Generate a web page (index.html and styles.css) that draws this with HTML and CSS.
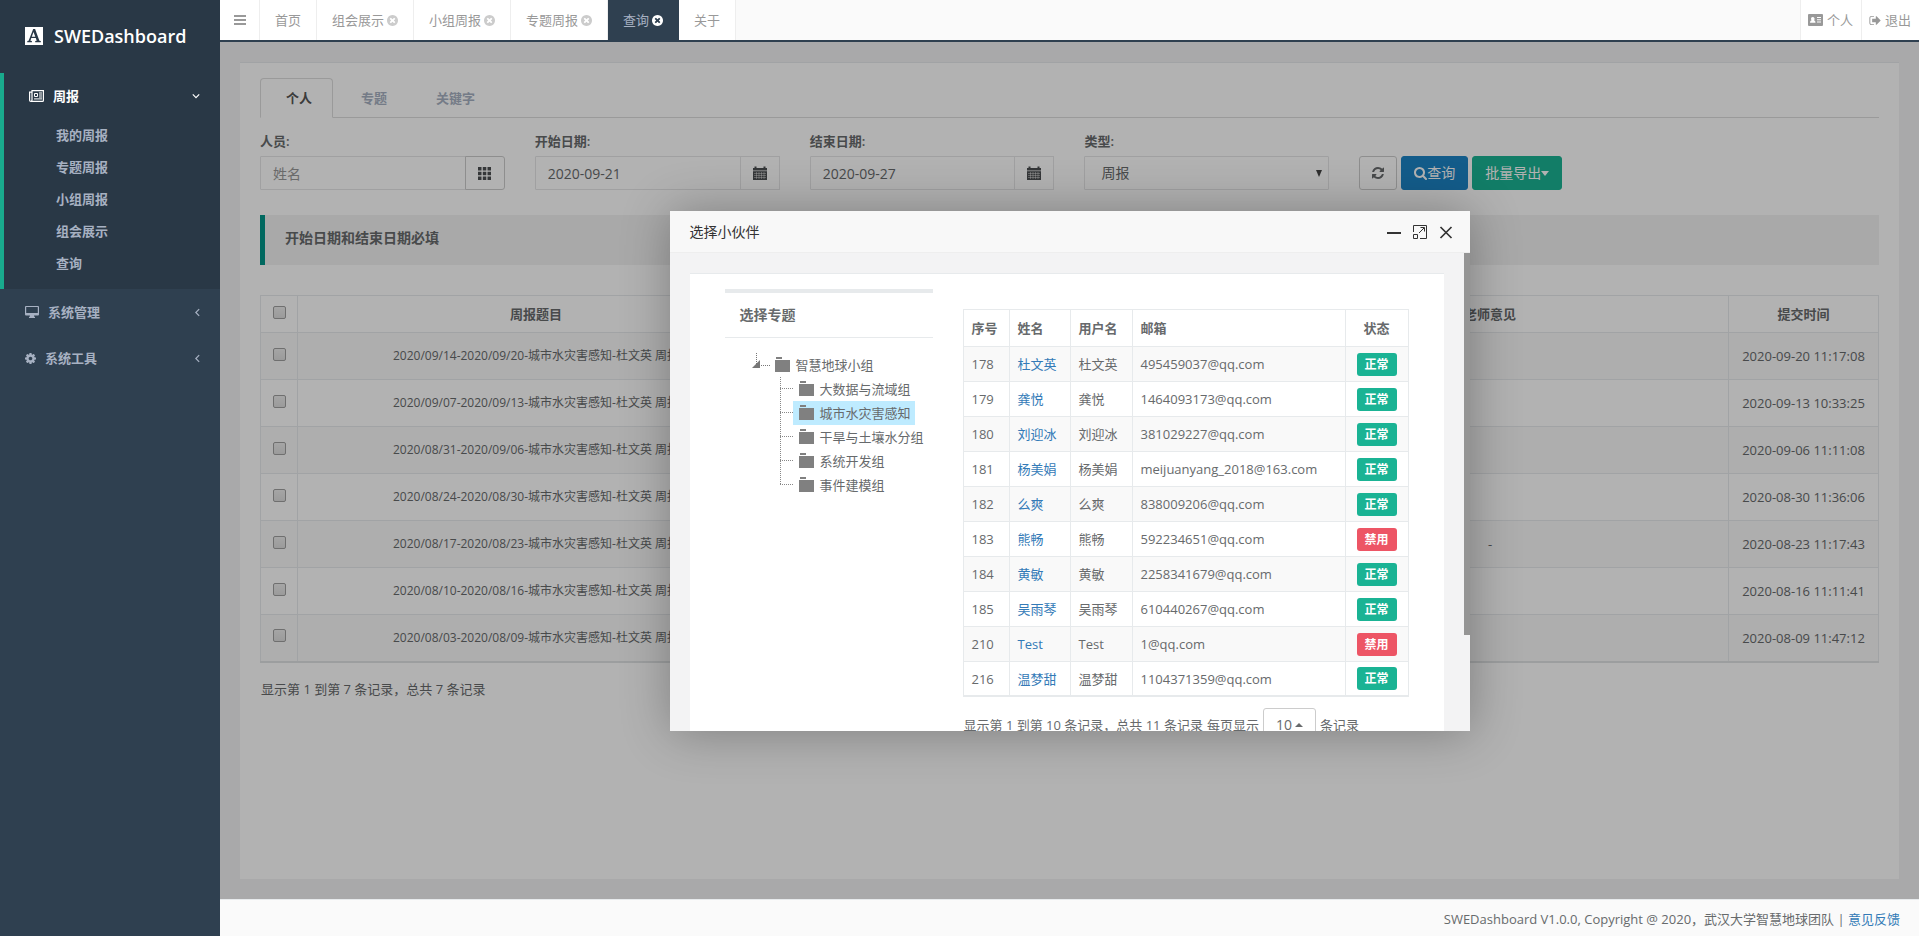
FILE: index.html
```html
<!DOCTYPE html>
<html lang="zh-CN">
<head>
<meta charset="utf-8">
<title>SWEDashboard</title>
<link rel="stylesheet" href="styles.css">
</head>
<body>
<svg class="sprite" aria-hidden="true">
  <symbol id="i-close" viewBox="0 0 1536 1792"><path d="M1149 1122q0-26-19-45l-181-181 181-181q19-19 19-45 0-27-19-46l-90-90q-19-19-46-19-26 0-45 19l-181 181-181-181q-19-19-45-19-27 0-46 19l-90 90q-19 19-19 46 0 26 19 45l181 181-181 181q-19 19-19 45 0 27 19 46l90 90q19 19 46 19 26 0 45-19l181-181 181 181q19 19 45 19 27 0 46-19l90-90q19-19 19-46zm387-226q0 209-103 385.5t-279.5 279.5-385.5 103-385.5-103-279.5-279.5-103-385.5 103-385.5 279.5-279.5 385.5-103 385.5 103 279.5 279.5 103 385.5z"/></symbol>
  <symbol id="i-calendar" viewBox="0 0 14 14"><path d="M0 2h1.500V0.500h2V2h7V0.500h2V2H14v2.500H0z"/><path d="M0 5.200h14V14H0z"/><path class="grid-line" d="M1 7.500h12M1 9.500h12M1 11.500h12M3.500 6v7M6 6v7M8.500 6v7M11 6v7"/></symbol>
  <symbol id="i-folder" viewBox="0 0 15 15"><path d="M1 0h6v2H1zM0 3h15v12H0z"/></symbol>
  <symbol id="i-left" viewBox="0 0 6 10"><path d="M5 1 1 5l4 4" fill="none" stroke="currentColor" stroke-width="1.500"/></symbol>
</svg>

<div class="app">
  <aside class="sidebar">
    <div class="brand">
      <svg class="brand-logo" viewBox="0 0 18 18"><path fill="#fff" d="M0 0h18v18H0z"/><path fill="#293846" fill-rule="evenodd" d="M8.200 2h1.900l4.300 11.700 1.400.3v1.200h-5.600V14l1.500-.3-.9-2.600H6.300l-.9 2.600 1.500.3v1.200H2.300V14l1.300-.3zM8.500 4.900 6.800 9.800h3.500z"/></svg>
      <span>SWEDashboard</span>
    </div>
    <nav>
      <section class="group">
        <a class="item item-open" href="#"><svg class="ic-news" viewBox="0 0 15 12"><path fill="none" stroke="currentColor" stroke-width="1.200" d="M3 .6h11.400v9.800q0 1-1 1H1.800q-1.200 0-1.200-1.200V2.200H3zM3 2v8q0 1.400-1.200 1.400"/><path fill="none" stroke="currentColor" d="M5.500 3.500h3v3h-3zM10 3h3M10 5h3M10 7h3M5 8.900h8"/></svg><span>周报</span><svg class="chev-down" viewBox="0 0 10 6"><path d="m1 1 4 4 4-4" fill="none" stroke="currentColor" stroke-width="1.500"/></svg></a>
        <ul class="subnav">
          <li><a href="#">我的周报</a></li>
          <li><a href="#">专题周报</a></li>
          <li><a href="#">小组周报</a></li>
          <li><a href="#">组会展示</a></li>
          <li><a href="#">查询</a></li>
        </ul>
      </section>
      <a class="item" href="#"><svg class="ic-desk" viewBox="0 0 14 12"><path fill-rule="evenodd" d="M1 0h12q1 0 1 1v7.500q0 1-1 1H9l.5 1.500H10v1H4v-1h.5L5 9.500H1q-1 0-1-1V1q0-1 1-1zm.2 1.100v6h11.600v-6z"/></svg><span>系统管理</span><svg class="chev-left"><use href="#i-left"/></svg></a>
      <a class="item" href="#"><svg class="ic-gear" viewBox="0 128 1536 1536"><path d="M1024 896q0-106-75-181t-181-75-181 75-75 181 75 181 181 75 181-75 75-181zm512-109v222q0 12-8 23t-20 13l-185 28q-19 54-39 91 35 50 107 138 10 12 10 25t-9 23q-27 37-99 108t-94 71q-12 0-26-9l-138-108q-44 23-91 38-16 136-29 186-7 28-36 28h-222q-14 0-24.500-8.500t-11.500-21.500l-28-184q-49-16-90-37l-141 107q-10 9-25 9-14 0-25-11-126-114-165-168-7-10-7-23 0-12 8-23 15-21 51-66.500t54-70.500q-27-50-41-99l-183-27q-13-2-21-12.500t-8-23.500v-222q0-12 8-23t19-13l186-28q14-46 39-92-40-57-107-138-10-12-10-24 0-10 9-23 26-36 98.500-107.500t94.500-71.500q13 0 26 10l138 107q44-23 91-38 16-136 29-186 7-28 36-28h222q14 0 24.500 8.500t11.500 21.500l28 184q49 16 90 37l142-107q9-9 24-9 13 0 25 10 129 119 165 170 7 8 7 22 0 12-8 23-15 21-51 66.500t-54 70.500q26 50 41 98l183 28q13 2 21 12.500t8 23.500z"/></svg><span>系统工具</span><svg class="chev-left"><use href="#i-left"/></svg></a>
    </nav>
  </aside>

  <div class="main">
    <header class="topbar">
      <button class="menu-btn" type="button" aria-label="菜单"><svg viewBox="0 0 12 10"><path d="M0 0h12v2H0zM0 4h12v2H0zM0 8h12v2H0z"/></svg></button>
      <a class="page-tab" href="#">首页</a>
      <a class="page-tab" href="#">组会展示<svg><use href="#i-close"/></svg></a>
      <a class="page-tab" href="#">小组周报<svg><use href="#i-close"/></svg></a>
      <a class="page-tab" href="#">专题周报<svg><use href="#i-close"/></svg></a>
      <a class="page-tab page-tab-active" href="#">查询<svg><use href="#i-close"/></svg></a>
      <a class="page-tab" href="#">关于</a>
      <div class="user-links">
        <a href="#"><svg class="ic-card" viewBox="0 0 15 12"><path fill-rule="evenodd" d="M1 0h13q1 0 1 1v10q0 1-1 1H1q-1 0-1-1V1q0-1 1-1zm1 8.800h5.500q0-2.300-1.500-2.600 1-1 .4-2.200-.6-1-1.600-1-1.200 0-1.700 1-.4 1.300.5 2.200Q2 6.500 2 8.800zM9 3v1h4V3zm0 2.200v1h4v-1zm0 2.300v1h4v-1z"/></svg>个人</a>
        <a href="#"><svg class="ic-out" viewBox="0 128 1568 1536"><path d="M640 1440q0 4 1 20t.5 26.500-3 23.500-10 19.500-20.500 6.500h-320q-119 0-203.500-84.500t-84.500-203.500v-704q0-119 84.500-203.500t203.500-84.500h320q13 0 22.500 9.500t9.500 22.500q0 4 1 20t.5 26.500-3 23.500-10 19.500-20.500 6.500h-320q-66 0-113 47t-47 113v704q0 66 47 113t113 47h312l11.500 1 11.500 3 8 5.500 7 9 2 13.500zm928-544q0 26-19 45l-544 544q-19 19-45 19t-45-19-19-45v-288h-448q-26 0-45-19t-19-45v-384q0-26 19-45t45-19h448v-288q0-26 19-45t45-19 45 19l544 544q19 19 19 45z"/></svg>退出</a>
      </div>
    </header>

    <main class="content">
      <div class="panel">
        <nav class="tabs">
          <a class="tab tab-active" href="#">个人</a>
          <a class="tab" href="#">专题</a>
          <a class="tab" href="#">关键字</a>
        </nav>
        <form class="filters">
          <div class="field">
            <label for="person">人员:</label>
            <div class="group-input">
              <input id="person" type="text" placeholder="姓名">
              <button class="addon addon-btn" type="button" aria-label="选择人员"><svg viewBox="0 0 13 13"><path d="M0 0h3.500v3.500H0zM4.800 0h3.500v3.500H4.800zM9.500 0H13v3.500H9.500zM0 4.800h3.500v3.500H0zM4.800 4.800h3.500v3.500H4.800zM9.500 4.800H13v3.500H9.500zM0 9.500h3.500V13H0zM4.800 9.500h3.500V13H4.800zM9.500 9.500H13V13H9.500z"/></svg></button>
            </div>
          </div>
          <div class="field">
            <label for="from">开始日期:</label>
            <div class="group-input">
              <input id="from" type="text" value="2020-09-21">
              <span class="addon"><svg><use href="#i-calendar"/></svg></span>
            </div>
          </div>
          <div class="field">
            <label for="to">结束日期:</label>
            <div class="group-input">
              <input id="to" type="text" value="2020-09-27">
              <span class="addon"><svg><use href="#i-calendar"/></svg></span>
            </div>
          </div>
          <div class="field">
            <label for="kind">类型:</label>
            <div class="select-wrap">
              <select id="kind"><option>周报</option></select>
              <svg viewBox="0 0 6 7"><path d="M0 0h6L3 7z"/></svg>
            </div>
          </div>
          <div class="actions">
            <button class="btn" type="button" aria-label="刷新"><svg class="ic-refresh" viewBox="0 128 1536 1536"><path d="M1511 1056q0 5-1 7-64 268-268 434.500t-478 166.500q-146 0-282.500-55t-243.500-157l-129 129q-19 19-45 19t-45-19-19-45v-448q0-26 19-45t45-19h448q26 0 45 19t19 45-19 45l-137 137q71 66 161 102t187 36q134 0 250-65t186-179q11-17 53-117 8-23 30-23h192q13 0 22.500 9.500t9.500 22.500zm25-800v448q0 26-19 45t-45 19h-448q-26 0-45-19t-19-45 19-45l138-138q-148-137-349-137-134 0-250 65t-186 179q-11 17-53 117-8 23-30 23h-199q-13 0-22.500-9.500t-9.500-22.500v-7q65-268 270-434.500t480-166.500q146 0 284 55.500t245 156.500l130-129q19-19 45-19t45 19 19 45z"/></svg></button>
            <button class="btn btn-blue" type="button"><svg class="ic-search" viewBox="0 128 1664 1664"><path d="M1152 832q0-185-131.500-316.500t-316.500-131.500-316.500 131.500-131.500 316.500 131.500 316.500 316.500 131.500 316.500-131.500 131.500-316.500zm512 832q0 52-38 90t-90 38q-54 0-90-38l-343-342q-179 124-399 124-143 0-273.500-55.500t-225-150-150-225-55.500-273.500 55.500-273.500 150-225 225-150 273.500-55.500 273.500 55.500 225 150 150 225 55.500 273.500q0 220-124 399l343 343q37 37 37 90z"/></svg>查询</button>
            <button class="btn btn-green" type="button">批量导出<svg class="ic-caret" viewBox="0 0 8 5"><path d="M0 0h8L4 5z"/></svg></button>
          </div>
        </form>
        <p class="notice">开始日期和结束日期必填</p>
        <table class="reports">
          <colgroup><col class="c-check"><col><col><col><col class="c-time"></colgroup>
          <thead><tr><th><input type="checkbox" aria-label="全选"></th><th>周报题目</th><th></th><th>老师意见</th><th>提交时间</th></tr></thead>
          <tbody>
            <tr><td><input type="checkbox" aria-label="选择"></td><td class="t">2020/09/14-2020/09/20-城市水灾害感知-杜文英 周报</td><td></td><td></td><td>2020-09-20 11:17:08</td></tr>
            <tr><td><input type="checkbox" aria-label="选择"></td><td class="t">2020/09/07-2020/09/13-城市水灾害感知-杜文英 周报</td><td></td><td></td><td>2020-09-13 10:33:25</td></tr>
            <tr><td><input type="checkbox" aria-label="选择"></td><td class="t">2020/08/31-2020/09/06-城市水灾害感知-杜文英 周报</td><td></td><td></td><td>2020-09-06 11:11:08</td></tr>
            <tr><td><input type="checkbox" aria-label="选择"></td><td class="t">2020/08/24-2020/08/30-城市水灾害感知-杜文英 周报</td><td></td><td></td><td>2020-08-30 11:36:06</td></tr>
            <tr><td><input type="checkbox" aria-label="选择"></td><td class="t">2020/08/17-2020/08/23-城市水灾害感知-杜文英 周报</td><td></td><td>-</td><td>2020-08-23 11:17:43</td></tr>
            <tr><td><input type="checkbox" aria-label="选择"></td><td class="t">2020/08/10-2020/08/16-城市水灾害感知-杜文英 周报</td><td></td><td></td><td>2020-08-16 11:11:41</td></tr>
            <tr><td><input type="checkbox" aria-label="选择"></td><td class="t">2020/08/03-2020/08/09-城市水灾害感知-杜文英 周报</td><td></td><td></td><td>2020-08-09 11:47:12</td></tr>
          </tbody>
        </table>
        <p class="summary">显示第 1 到第 7 条记录，总共 7 条记录</p>
      </div>

      <div class="shade">
        <div class="dialog" role="dialog" aria-labelledby="dlg-title">
          <div class="dialog-head">
            <h2 id="dlg-title">选择小伙伴</h2>
            <button type="button" aria-label="最小化"><svg viewBox="0 0 14 14"><path d="M0 7h14v2H0z"/></svg></button>
            <button type="button" aria-label="最大化"><svg viewBox="0 0 14 14"><path fill="none" stroke="currentColor" d="M.5 7V.5h13v13H7M.5 9.500h4v4h-4zM6 8l5-5M7.500 2.500h4v4"/></svg></button>
            <button type="button" aria-label="关闭"><svg viewBox="0 0 14 14"><path fill="none" stroke="currentColor" stroke-width="1.700" d="m1.500 2 11 11M12.500 2l-11 11"/></svg></button>
          </div>
          <div class="dialog-body">
            <div class="pane">
              <div class="picker">
                <section class="tree-box">
                  <h3>选择专题</h3>
                  <ul class="tree">
                    <li class="root"><span class="node"><svg class="twig" viewBox="0 0 20 20"><path fill="none" stroke="currentColor" stroke-dasharray="1 1" d="M4.500 0v12M5 12.500h13"/><path d="M8 7v8H0z"/></svg><span class="leaf"><svg><use href="#i-folder"/></svg>智慧地球小组</span></span>
                      <ul>
                        <li><span class="leaf"><svg><use href="#i-folder"/></svg>大数据与流域组</span></li>
                        <li><span class="leaf leaf-on"><svg><use href="#i-folder"/></svg>城市水灾害感知</span></li>
                        <li><span class="leaf"><svg><use href="#i-folder"/></svg>干旱与土壤水分组</span></li>
                        <li><span class="leaf"><svg><use href="#i-folder"/></svg>系统开发组</span></li>
                        <li><span class="leaf"><svg><use href="#i-folder"/></svg>事件建模组</span></li>
                      </ul>
                    </li>
                  </ul>
                </section>
                <section class="people-box">
                  <table class="people">
                    <colgroup><col class="p-id"><col class="p-name"><col class="p-user"><col><col class="p-state"></colgroup>
                    <thead><tr><th>序号</th><th>姓名</th><th>用户名</th><th>邮箱</th><th>状态</th></tr></thead>
                    <tbody>
                      <tr><td>178</td><td><a href="#">杜文英</a></td><td>杜文英</td><td>495459037@qq.com</td><td><span class="badge">正常</span></td></tr>
                      <tr><td>179</td><td><a href="#">龚悦</a></td><td>龚悦</td><td>1464093173@qq.com</td><td><span class="badge">正常</span></td></tr>
                      <tr><td>180</td><td><a href="#">刘迎冰</a></td><td>刘迎冰</td><td>381029227@qq.com</td><td><span class="badge">正常</span></td></tr>
                      <tr><td>181</td><td><a href="#">杨美娟</a></td><td>杨美娟</td><td>meijuanyang_2018@163.com</td><td><span class="badge">正常</span></td></tr>
                      <tr><td>182</td><td><a href="#">么爽</a></td><td>么爽</td><td>838009206@qq.com</td><td><span class="badge">正常</span></td></tr>
                      <tr><td>183</td><td><a href="#">熊畅</a></td><td>熊畅</td><td>592234651@qq.com</td><td><span class="badge badge-off">禁用</span></td></tr>
                      <tr><td>184</td><td><a href="#">黄敏</a></td><td>黄敏</td><td>2258341679@qq.com</td><td><span class="badge">正常</span></td></tr>
                      <tr><td>185</td><td><a href="#">吴雨琴</a></td><td>吴雨琴</td><td>610440267@qq.com</td><td><span class="badge">正常</span></td></tr>
                      <tr><td>210</td><td><a href="#">Test</a></td><td>Test</td><td>1@qq.com</td><td><span class="badge badge-off">禁用</span></td></tr>
                      <tr><td>216</td><td><a href="#">温梦甜</a></td><td>温梦甜</td><td>1104371359@qq.com</td><td><span class="badge">正常</span></td></tr>
                    </tbody>
                  </table>
                  <div class="pager"><span>显示第 1 到第 10 条记录，总共 11 条记录</span><span>每页显示</span><button class="btn size-btn" type="button">10<svg class="ic-up" viewBox="0 0 8 4"><path d="M0 4h8L4 0z"/></svg></button><span>条记录</span></div>
                </section>
              </div>
            </div>
            <div class="scrollbar"></div>
          </div>
        </div>
      </div>
    </main>

    <footer class="footer">SWEDashboard V1.0.0, Copyright @ 2020，武汉大学智慧地球团队 | <a href="#">意见反馈</a></footer>
  </div>
</div>
</body>
</html>
```
FILE: styles.css
```css
* { box-sizing: border-box; }
body {
  margin: 0;
  font: 13px/20px "Open Sans", "Noto Sans CJK SC", sans-serif;
  color: #676a6c;
}
ul { list-style: none; margin: 0; padding: 0; }
a { color: #337ab7; text-decoration: none; }
button, input, select { font: inherit; color: inherit; }
button { cursor: pointer; }
svg { fill: currentColor; flex: none; }
.sprite { display: none; }

.app { display: flex; height: 100vh; background: #2f4050; }

/* Sidebar */
.sidebar { width: 220px; flex: none; }
.brand {
  display: flex; align-items: center; gap: 11px;
  height: 73px; padding: 0 0 2px 25px;
  background: #293846; color: #fff;
  font-size: 18px; font-weight: 600;
}
.brand-logo { width: 18px; height: 18px; }
.group { border-left: 4px solid #19aa8d; background: #293846; padding-bottom: 10px; }
.item {
  display: flex; align-items: center; gap: 9px;
  height: 46px; padding: 0 20px 0 25px;
  color: #a7b1c2; font-weight: 600;
}
.item span { flex: 1; }
.item-open { color: #fff; }
.ic-news { width: 15px; height: 12px; }
.ic-desk { width: 14px; height: 12px; }
.ic-gear { width: 11px; height: 11px; }
.chev-down { width: 8px; height: 6px; }
.chev-left { width: 5px; height: 9px; }
.subnav a {
  display: block; padding: 6px 0 6px 52px;
  color: #a7b1c2; font-weight: 600;
}

/* Top bar */
.main { flex: 1; min-width: 0; display: flex; flex-direction: column; }
.topbar {
  display: flex; flex: none; height: 42px;
  background: #fafafa; border-bottom: 2px solid #2f4050;
}
.menu-btn {
  width: 40px; padding: 0; border: 0; border-right: 1px solid #eee;
  background: #fff; color: #999;
  display: flex; align-items: center; justify-content: center;
}
.menu-btn svg { width: 12px; height: 10px; }
.page-tab {
  display: flex; align-items: center; gap: 3px;
  padding: 0 15px; border-right: 1px solid #eee;
  background: #fff; color: #999;
}
.page-tab svg { width: 11px; height: 13px; color: #ccc; }
.page-tab-active { background: #2f4050; color: #a7b1c2; border-color: #2f4050; }
.page-tab-active svg { color: #fff; }
.user-links { display: flex; margin-left: auto; }
.user-links a {
  display: flex; align-items: center; gap: 4px;
  padding: 0 8px 0 7px; border-left: 1px solid #eee;
  background: #fff; color: #999;
}
.ic-card { width: 15px; height: 12px; }
.ic-out { width: 12px; height: 11px; }

/* Content */
.content { position: relative; flex: 1; min-height: 0; padding: 20px; background: #f3f3f4; overflow: hidden; }
.panel {
  height: 100%; padding: 15px 20px;
  background: #fff; border-top: 1px solid #e7eaec;
}
.tabs { display: flex; gap: 2px; border-bottom: 1px solid #ddd; }
.tab {
  padding: 9px 20px 9px 25px; margin-bottom: -1px;
  border: 1px solid transparent; border-radius: 4px 4px 0 0;
  color: #a7b1c2; font-weight: 600;
}
.tab-active { background: #fff; border-color: #ddd #ddd #fff; color: #555; }

.filters {
  display: grid; grid-template-columns: repeat(6, 1fr); column-gap: 30px;
  align-items: end; padding-top: 14px;
}
.field label { display: block; line-height: 19px; margin-bottom: 5px; font-weight: 600; }
.group-input { display: flex; }
.group-input input, .select-wrap select {
  width: 100%; min-width: 0; height: 34px; padding: 6px 12px;
  border: 1px solid #e5e6e7; border-radius: 1px; background: #fff;
  font-size: 14px; outline: 0;
}
.group-input input::placeholder { color: #999; opacity: 1; }
.addon {
  flex: none; width: 40px; height: 34px; margin-left: -1px; padding: 0;
  display: flex; align-items: center; justify-content: center;
  border: 1px solid #e5e6e7; background: #fff; color: #4c4f52;
}
.addon-btn { border-color: #ccc; border-radius: 0 3px 3px 0; }
.addon svg { width: 14px; height: 14px; }
.addon-btn svg { width: 13px; height: 13px; }
.grid-line { stroke: #fff; stroke-width: 0.400; fill: none; }
.select-wrap { position: relative; }
.select-wrap select { appearance: none; padding: 6px 16px; }
.select-wrap svg { position: absolute; right: 7px; top: 14px; width: 6px; height: 7px; color: #444; pointer-events: none; }
.actions { grid-column: span 2; display: flex; gap: 4px; }
.btn {
  display: flex; align-items: center; height: 34px; padding: 0 12px;
  border: 1px solid #ccc; border-radius: 3px; background: #fff;
  font-size: 14px;
}
.btn-blue { background: #1c84c6; border-color: #1c84c6; color: #fff; }
.btn-green { background: #1ab394; border-color: #1ab394; color: #fff; }
.ic-refresh { width: 12px; height: 12px; }
.ic-search { width: 13px; height: 13px; }
.ic-caret { width: 8px; height: 5px; }

.notice {
  margin: 25px 0 30px; padding: 13px 20px 17px;
  background: #f2f2f2; border-left: 5px solid #009688;
  font-size: 14px; font-weight: 600;
}
table { width: 100%; border-collapse: collapse; table-layout: fixed; }
th, td { border: 1px solid #e7eaec; padding: 0 8px; }
th { height: 37px; font-weight: 600; }
tbody tr:nth-child(odd) { background: #f9f9f9; }
.reports { text-align: center; border-bottom: 2px solid #e0e2e4; }
.reports td { height: 47px; }
.reports .t { font-size: 12px; }
.c-check { width: 37px; }
.c-time { width: 150px; }
.reports input {
  appearance: none; display: block; width: 13px; height: 13px; margin: 0 auto 4px;
  border: 1px solid #a0a0a0; border-radius: 2px;
  background: linear-gradient(#ededed, #dedede);
}
.summary { margin: 16px 1px; }

/* Dialog */
.shade {
  position: absolute; inset: 0; display: flex; align-items: center; justify-content: center;
  background: rgba(0, 0, 0, 0.3);
}
.dialog {
  width: 800px; height: 520px; display: flex; flex-direction: column;
  border-radius: 2px; box-shadow: 1px 1px 50px rgba(0, 0, 0, 0.3);
}
.dialog-head {
  flex: none; display: flex; align-items: center; gap: 12px;
  height: 42px; padding: 2px 17px 0 20px;
  background: #f8f8f8; border-bottom: 1px solid #eee; color: #333;
}
.dialog-head h2 { flex: 1; margin: 0; font-size: 14px; font-weight: 400; }
.dialog-head button { display: flex; padding: 0; border: 0; background: none; }
.dialog-head svg { width: 14px; height: 14px; }
.dialog-body { flex: 1; min-height: 0; display: flex; }
.pane { flex: 1; min-width: 0; padding: 20px 20px 0; background: #f3f3f4; overflow: hidden; }
.scrollbar { width: 6px; background: linear-gradient(#959595 80%, #f3f3f4 80%); }
.picker {
  display: grid; grid-template-columns: 208px 1fr; gap: 30px;
  padding: 15px 35px 20px; background: #fff; border-top: 1px solid #e7eaec;
}
.tree-box h3 {
  margin: 0; padding: 12px 15px; height: 49px;
  border-top: 4px solid #e7eaec; border-bottom: 1px solid #e7eaec;
  font-size: 14px; font-weight: 600;
}
.tree { padding: 15px 0 0 27px; }
.node { display: flex; }
.twig { width: 20px; height: 20px; margin-right: -3px; color: #777; }
.leaf { display: inline-flex; align-items: center; gap: 6px; height: 24px; padding: 0 4px 0 6px; color: #676a6c; white-space: nowrap; }
.leaf svg { width: 15px; height: 15px; color: #808080; }
.leaf-on { background: #beebff; }
.tree ul { margin-left: 28px; }
.tree ul li {
  display: flex; align-items: center; height: 24px;
  background: repeating-linear-gradient(#888 0 1px, transparent 1px 2px) 0 0 / 1px 100% no-repeat;
}
.tree ul li:last-child { background-size: 1px 50%; }
.tree ul li::before {
  content: ""; width: 13px; height: 1px; flex: none;
  background: repeating-linear-gradient(90deg, #888 0 1px, transparent 1px 2px);
}
.people-box { padding-top: 20px; }
.people { text-align: left; border-bottom: 2px solid #e7eaec; }
.people td { height: 35px; padding-top: 1px; }
.people th:last-child, .people td:last-child { text-align: center; }
.p-id { width: 46px; }
.p-name { width: 61px; }
.p-user { width: 62px; }
.p-state { width: 63px; }
.badge {
  display: block; width: 40px; margin: 0 auto; border-radius: 3px;
  background: #1ab394; color: #fff; font-size: 12px; font-weight: 700; line-height: 23px;
}
.badge-off { background: #ed5565; }
.pager { display: flex; align-items: center; gap: 4px; padding: 11px 1px; white-space: nowrap; }
.size-btn { gap: 3px; }
.ic-up { width: 8px; height: 4px; }

/* Footer */
.footer {
  flex: none; height: 37px; padding: 9px 19px; text-align: right;
  background: #fafafa; border-top: 1px solid #e7eaec;
}
```
